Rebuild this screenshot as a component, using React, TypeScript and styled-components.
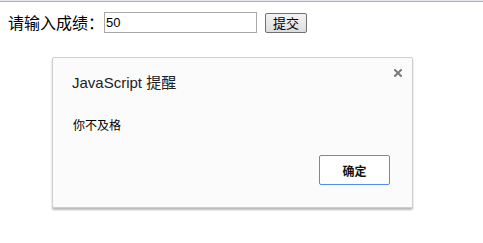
import styled, { createGlobalStyle } from "styled-components";

const GlobalStyle = createGlobalStyle`
    html, body {
        margin: 0;
        padding: 0;
        background: #ffffff;
        font-family: "Liberation Sans", "Noto Sans CJK SC", sans-serif;
    }
`;

const cjk = `"Noto Sans CJK SC", "Liberation Sans", sans-serif`;

const CloseIcon = () => (
    <svg width="8" height="8" viewBox="0 0 8 8">
        <path d="M1 1 L7 7 M7 1 L1 7" stroke="#7b7b7b" strokeWidth="2" strokeLinecap="square" />
    </svg>
);

const App = () => {
    return (
        <>
            <GlobalStyle />
            <Page>
                <TopRule />
                <FormRow>
                    <Label>请输入成绩：</Label>
                    <ScoreInput defaultValue="50" />
                    <SubmitButton>提交</SubmitButton>
                </FormRow>

                <Dialog>
                    <DialogHeader>
                        <DialogTitle>
                            JavaScript <span>提醒</span>
                        </DialogTitle>
                        <CloseButton>
                            <CloseIcon />
                        </CloseButton>
                    </DialogHeader>
                    <DialogMessage>你不及格</DialogMessage>
                    <DialogFooter>
                        <OkButton>确定</OkButton>
                    </DialogFooter>
                </Dialog>
            </Page>
        </>
    );
};

export default App;

const Page = styled.div`
    width: 483px;
    height: 243px;
    display: flex;
    flex-direction: column;
`;

const TopRule = styled.div`
    height: 0;
    border-top: 1px solid #e3e6ee;
    border-bottom: 1px solid #aab3c8;
`;

const FormRow = styled.div`
    display: flex;
    align-items: center;
    padding: 10px 8px 0;
    height: 21px;
`;

const Label = styled.span`
    font-family: ${cjk};
    font-size: 16px;
    line-height: 21px;
    color: #000;
`;

const ScoreInput = styled.input`
    box-sizing: border-box;
    width: 153px;
    height: 21px;
    margin: 0;
    padding: 0 1px;
    border: 1px solid #a9a9a9;
    font-family: "Liberation Sans", sans-serif;
    font-size: 13px;
    color: #000;
    outline: none;
`;

const SubmitButton = styled.button`
    box-sizing: border-box;
    width: 42px;
    height: 20px;
    margin: 0 0 0 8px;
    padding: 0;
    border: 1px solid #707070;
    border-radius: 2px;
    background: linear-gradient(#f3f3f3, #dddddd);
    font-family: ${cjk};
    font-size: 13px;
    line-height: 18px;
    color: #000;
`;

const Dialog = styled.div`
    box-sizing: border-box;
    width: 361px;
    height: 151px;
    margin: 24px 0 0 52px;
    display: flex;
    flex-direction: column;
    background: #fbfbfb;
    border: 1px solid #cfcfcf;
    border-radius: 2px;
    box-shadow: 0 2px 2px rgba(0, 0, 0, 0.28);
`;

const DialogHeader = styled.div`
    display: flex;
    justify-content: space-between;
    align-items: flex-start;
    padding: 14px 10px 0 19px;
`;

const DialogTitle = styled.div`
    font-family: "Liberation Sans", sans-serif;
    font-size: 15px;
    line-height: 20px;
    color: #222;

    span {
        font-family: ${cjk};
    }
`;

const CloseButton = styled.div`
    display: flex;
    margin-top: -3px;
    width: 8px;
    height: 8px;
`;

const DialogMessage = styled.div`
    padding: 25px 0 0 20px;
    font-family: ${cjk};
    font-size: 12px;
    line-height: 14px;
    color: #000;
`;

const DialogFooter = styled.div`
    margin-top: auto;
    display: flex;
    justify-content: flex-end;
    padding: 0 22px 22px 0;
`;

const OkButton = styled.button`
    box-sizing: border-box;
    width: 71px;
    height: 30px;
    margin: 0;
    padding: 0;
    border: 1px solid #4d8ef0;
    border-radius: 2px;
    background: #ffffff;
    font-family: ${cjk};
    font-size: 12px;
    font-weight: bold;
    color: #111;
`;
